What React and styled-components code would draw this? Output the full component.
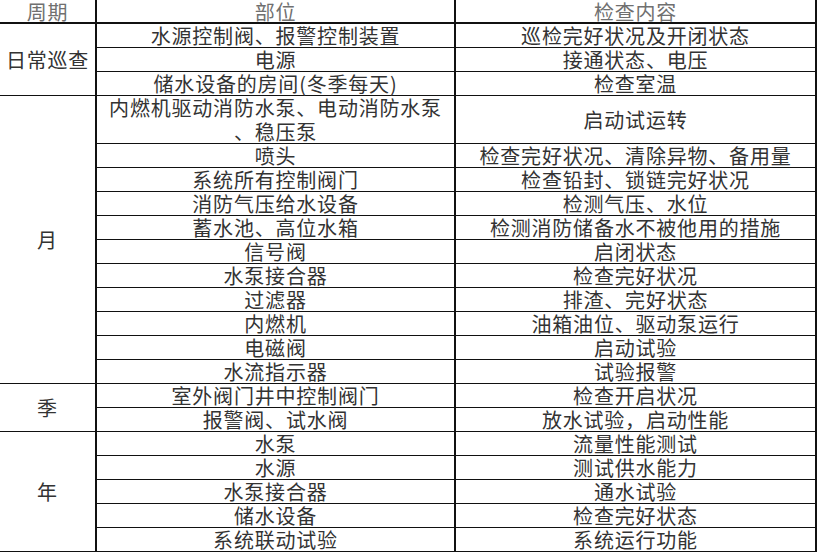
import React from 'react';
import styled, { createGlobalStyle } from 'styled-components';

const GlobalStyle = createGlobalStyle`
  html, body {
    margin: 0;
    padding: 0;
    background: #ffffff;
  }
  * {
    box-sizing: border-box;
  }
`;

// Grid table: 95px period column, 359px part column, 363px content column
const Table = styled.div`
  display: grid;
  grid-template-columns: 95px 359px 363px;
  grid-auto-rows: 24px;
  width: 817px;
  font-family: "Noto Sans CJK SC", "Noto Sans", sans-serif;
  font-size: 20px;
  letter-spacing: 0.8px;
  color: #333;
`;

const Cell = styled.div`
  grid-column: ${p => p.$col};
  grid-row: span ${p => p.$span || 1};
  display: flex;
  align-items: center;
  justify-content: center;
  text-align: center;
  line-height: 24px;
  white-space: nowrap;
  border-bottom: 1px solid #111;
  border-left: ${p => (p.$col > 1 ? '2px solid #111' : 'none')};
  border-right: ${p => (p.$col === 3 ? '2px solid #111' : 'none')};
  padding-top: 1px;
`;

const HeadCell = styled(Cell)`
  color: #707070;
  border-bottom: 2px solid #111;
  padding-top: 1px;
`;

const groups = [
  {
    period: '日常巡查',
    items: [
      ['水源控制阀、报警控制装置', '巡检完好状况及开闭状态'],
      ['电源', '接通状态、电压'],
      ['储水设备的房间(冬季每天)', '检查室温'],
    ],
  },
  {
    period: '月',
    items: [
      [['内燃机驱动消防水泵、电动消防水泵', '、稳压泵'], '启动试运转', 2],
      ['喷头', '检查完好状况、清除异物、备用量'],
      ['系统所有控制阀门', '检查铅封、锁链完好状况'],
      ['消防气压给水设备', '检测气压、水位'],
      ['蓄水池、高位水箱', '检测消防储备水不被他用的措施'],
      ['信号阀', '启闭状态'],
      ['水泵接合器', '检查完好状况'],
      ['过滤器', '排渣、完好状态'],
      ['内燃机', '油箱油位、驱动泵运行'],
      ['电磁阀', '启动试验'],
      ['水流指示器', '试验报警'],
    ],
  },
  {
    period: '季',
    items: [
      ['室外阀门井中控制阀门', '检查开启状况'],
      ['报警阀、试水阀', '放水试验，启动性能'],
    ],
  },
  {
    period: '年',
    items: [
      ['水泵', '流量性能测试'],
      ['水源', '测试供水能力'],
      ['水泵接合器', '通水试验'],
      ['储水设备', '检查完好状态'],
      ['系统联动试验', '系统运行功能'],
    ],
  },
];

function renderText(text) {
  if (Array.isArray(text)) {
    return (
      <span>
        {text.map((line, i) => (
          <React.Fragment key={i}>
            {i > 0 && <br />}
            {line}
          </React.Fragment>
        ))}
      </span>
    );
  }
  return text;
}

export default function App() {
  return (
    <>
      <GlobalStyle />
      <Table>
        <HeadCell $col={1}>周期</HeadCell>
        <HeadCell $col={2}>部位</HeadCell>
        <HeadCell $col={3}>检查内容</HeadCell>
        {groups.map(group => {
          const total = group.items.reduce((n, it) => n + (it[2] || 1), 0);
          return (
            <React.Fragment key={group.period}>
              <Cell $col={1} $span={total}>{group.period}</Cell>
              {group.items.map((it, i) => (
                <React.Fragment key={i}>
                  <Cell $col={2} $span={it[2]}>{renderText(it[0])}</Cell>
                  <Cell $col={3} $span={it[2]}>{it[1]}</Cell>
                </React.Fragment>
              ))}
            </React.Fragment>
          );
        })}
      </Table>
    </>
  );
}
